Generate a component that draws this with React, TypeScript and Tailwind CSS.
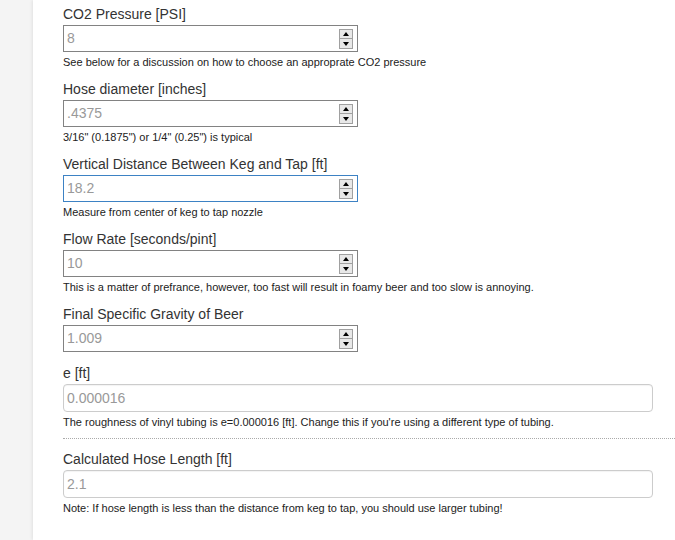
import React from "react";

function Spinner() {
  return (
    <div className="absolute right-[4px] top-[3px] flex flex-col w-[14px]">
      <div className="h-[10px] bg-[#e8e8e8] border border-[#a0a0a0] flex items-center justify-center">
        <div className="w-0 h-0 border-l-[3px] border-r-[3px] border-b-[4px] border-l-transparent border-r-transparent border-b-black" />
      </div>
      <div className="h-[10px] bg-[#e8e8e8] border border-t-0 border-[#a0a0a0] flex items-center justify-center">
        <div className="w-0 h-0 border-l-[3px] border-r-[3px] border-t-[4px] border-l-transparent border-r-transparent border-t-black" />
      </div>
    </div>
  );
}

function NumField({ value, focused }: { value: string; focused?: boolean }) {
  return (
    <div
      className={
        "relative w-[295px] h-[27px] border bg-white flex items-center pl-[3px] text-[14px] text-[#999] " +
        (focused ? "border-[#3d82c4]" : "border-[#828282]")
      }
    >
      {value}
      <Spinner />
    </div>
  );
}

function TextField({ value }: { value: string }) {
  return (
    <div className="w-[590px] h-[28px] border border-[#ccc] rounded-[4px] bg-white flex items-center pl-[3px] text-[14px] text-[#999] shadow-[inset_0_1px_1px_rgba(0,0,0,0.05)]">
      {value}
    </div>
  );
}

function Label({ children }: { children: React.ReactNode }) {
  return <div className="text-[14px] leading-[20px] text-[#333] mb-px">{children}</div>;
}

function Help({ children }: { children: React.ReactNode }) {
  return <div className="text-[11px] leading-[15px] text-[#222] mt-[3px]">{children}</div>;
}

export default function App() {
  return (
    <div className="w-[675px] h-[540px] flex bg-[#f4f4f4] overflow-hidden" style={{ fontFamily: '"Liberation Sans", Arial, sans-serif' }}>
      <div className="w-[33px] shrink-0" />
      <div className="flex-1 bg-white pl-[30px] pr-[22px] pt-[4px] shadow-[-1px_0_3px_rgba(0,0,0,0.08)]">
        <div className="mb-[9px]">
          <Label>CO2 Pressure [PSI]</Label>
          <NumField value="8" />
          <Help>See below for a discussion on how to choose an approprate CO2 pressure</Help>
        </div>
        <div className="mb-[9px]">
          <Label>Hose diameter [inches]</Label>
          <NumField value=".4375" />
          <Help>3/16" (0.1875") or 1/4" (0.25") is typical</Help>
        </div>
        <div className="mb-[9px]">
          <Label>Vertical Distance Between Keg and Tap [ft]</Label>
          <NumField value="18.2" focused />
          <Help>Measure from center of keg to tap nozzle</Help>
        </div>
        <div className="mb-[9px]">
          <Label>Flow Rate [seconds/pint]</Label>
          <NumField value="10" />
          <Help>This is a matter of prefrance, however, too fast will result in foamy beer and too slow is annoying.</Help>
        </div>
        <div className="mb-[11px]">
          <Label>Final Specific Gravity of Beer</Label>
          <NumField value="1.009" />
        </div>
        <div>
          <Label>e [ft]</Label>
          <TextField value="0.000016" />
          <Help>The roughness of vinyl tubing is e=0.000016 [ft]. Change this if you're using a different type of tubing.</Help>
        </div>
        <div className="mt-[8px] mr-[-22px] border-t border-dotted border-[#aaa]" />
        <div className="mt-[10px]">
          <Label>Calculated Hose Length [ft]</Label>
          <TextField value="2.1" />
          <Help>Note: If hose length is less than the distance from keg to tap, you should use larger tubing!</Help>
        </div>
      </div>
    </div>
  );
}
